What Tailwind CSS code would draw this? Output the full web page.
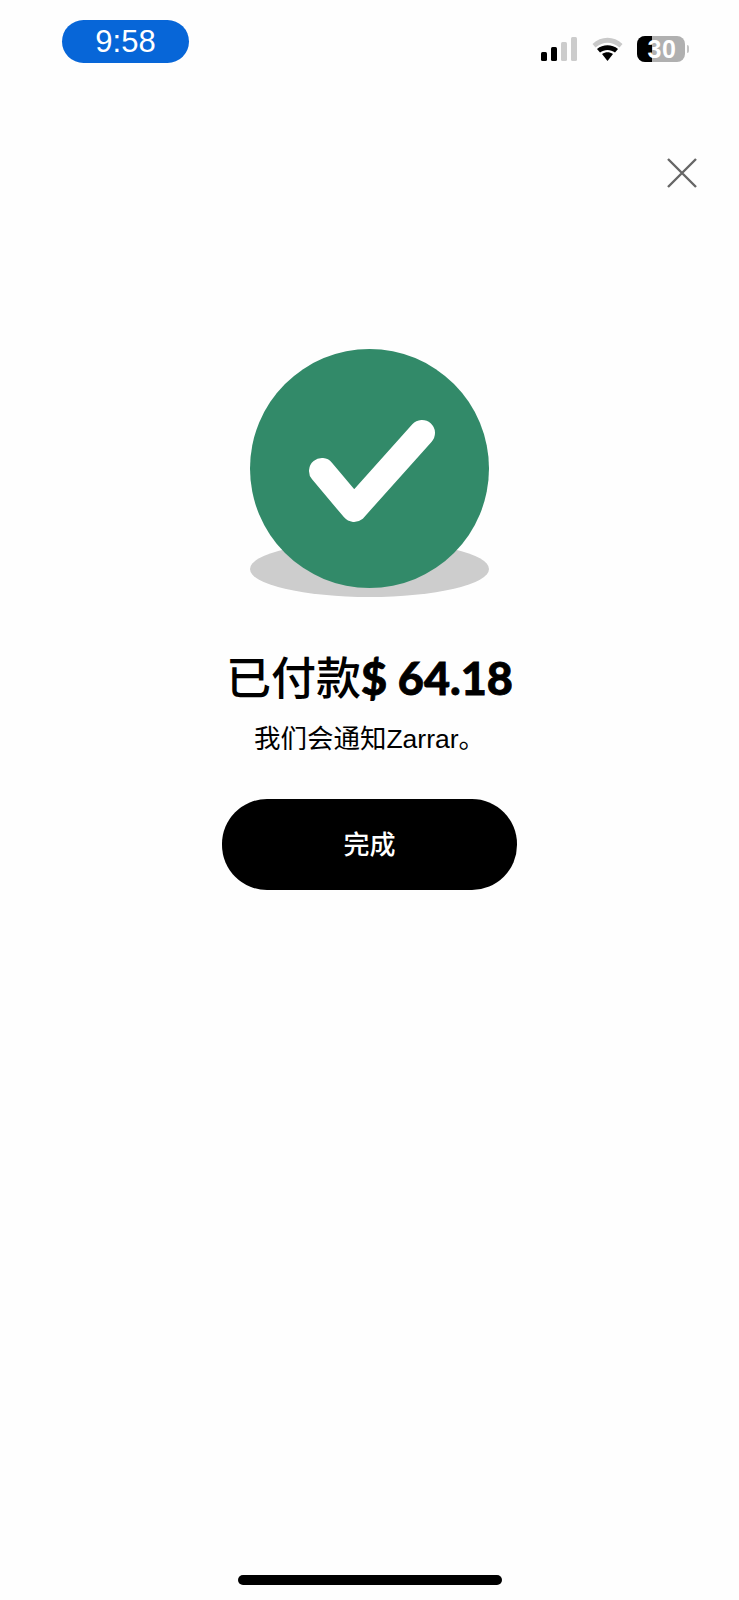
<!DOCTYPE html>
<html lang="zh-CN">
<head>
    <meta charset="UTF-8">
    <meta name="viewport" content="width=device-width, initial-scale=1.0">
    <script src="https://cdn.jsdelivr.net/npm/@tailwindcss/browser@4"></script>
    <title>已付款</title>
</head>
<body class="bg-white">
    <div class="flex flex-col h-[1600px] w-[739px] overflow-hidden bg-[#fefefe] font-['Liberation_Sans','Noto_Sans_CJK_SC',sans-serif] text-black">
        <!-- status bar -->
        <div class="flex justify-between pl-[62px] pr-[50px] pt-[20px] h-[63px]">
            <div class="flex items-center justify-center w-[127px] h-[43px] rounded-[22px] bg-[#0766d8] text-white text-[31px] leading-none">9:58</div>
            <div class="flex items-start pt-[16px]">
                <svg class="mt-[1px]" width="36" height="24" viewBox="0 0 36 24">
                    <rect x="0" y="15" width="6" height="9" rx="1.5" fill="#000"/>
                    <rect x="10" y="10" width="6" height="14" rx="1.5" fill="#000"/>
                    <rect x="20" y="5" width="6" height="19" rx="1.5" fill="#ccc"/>
                    <rect x="30" y="0" width="6" height="24" rx="1.5" fill="#ccc"/>
                </svg>
                <svg class="ml-[15px] mt-[1px]" width="31" height="24" viewBox="0 0 31 24">
                    <path d="M0.5 7 C9 -1.5 22 -1.5 30.5 7 L27.5 10.5 C20 4 11 4 3.5 10.5 Z" fill="#c9c9c9"/>
                    <path d="M5 12 C11 7 20 7 26 12 L23 15.5 C18.5 12 12.5 12 8 15.5 Z" fill="#000"/>
                    <path d="M10 17 C13.5 14.5 17.5 14.5 21 17 L15.5 24 Z" fill="#000"/>
                </svg>
                <div class="relative ml-[14px] flex w-[48px] h-[26px] rounded-[8px] overflow-hidden bg-[#b0b0b0]">
                    <div class="w-[15px] h-full bg-black"></div>
                    <span class="absolute left-[10px] top-0 w-[30px] text-center text-white text-[25px] leading-[26px] font-bold tracking-[0.5px]">30</span>
                </div>
                <div class="ml-[2px] mt-[9px] w-[2px] h-[8px] rounded-r-sm bg-[#c4c4c4]"></div>
            </div>
        </div>

        <!-- close -->
        <div class="flex justify-end pr-[42px] mt-[95px]">
            <svg width="30" height="30" viewBox="0 0 30 30" fill="none" stroke="#666" stroke-width="2.4">
                <path d="M1 1 L29 29 M29 1 L1 29"/>
            </svg>
        </div>

        <!-- success icon -->
        <div class="flex justify-center mt-[161px]">
            <svg width="239" height="248" viewBox="0 0 239 248">
                <ellipse cx="119.5" cy="220" rx="119.5" ry="28" fill="#cdcdcd"/>
                <circle cx="119.5" cy="119.5" r="119.5" fill="#328a69"/>
                <path d="M72 122 L104 160 L172 84" fill="none" stroke="#fff" stroke-width="26" stroke-linecap="round" stroke-linejoin="round"/>
            </svg>
        </div>

        <h1 class="mt-[53px] text-center text-[45px] leading-[56px] font-medium whitespace-nowrap">已付款<span class="font-['Lato',sans-serif] font-black text-[45px] [-webkit-text-stroke:0.8px_black]">$ 64.18</span></h1>
        <p class="mt-[14px] text-center text-[26.5px] leading-[34px]">我们会通知Zarrar。</p>

        <div class="flex justify-center mt-[43px]">
            <button class="w-[295px] h-[91px] rounded-[45px] bg-black text-white text-[26px] font-medium pt-[2px]">完成</button>
        </div>

        <!-- home indicator -->
        <div class="mt-auto mb-[15px] mx-auto w-[264px] h-[10px] rounded-full bg-black"></div>
    </div>
</body>
</html>
